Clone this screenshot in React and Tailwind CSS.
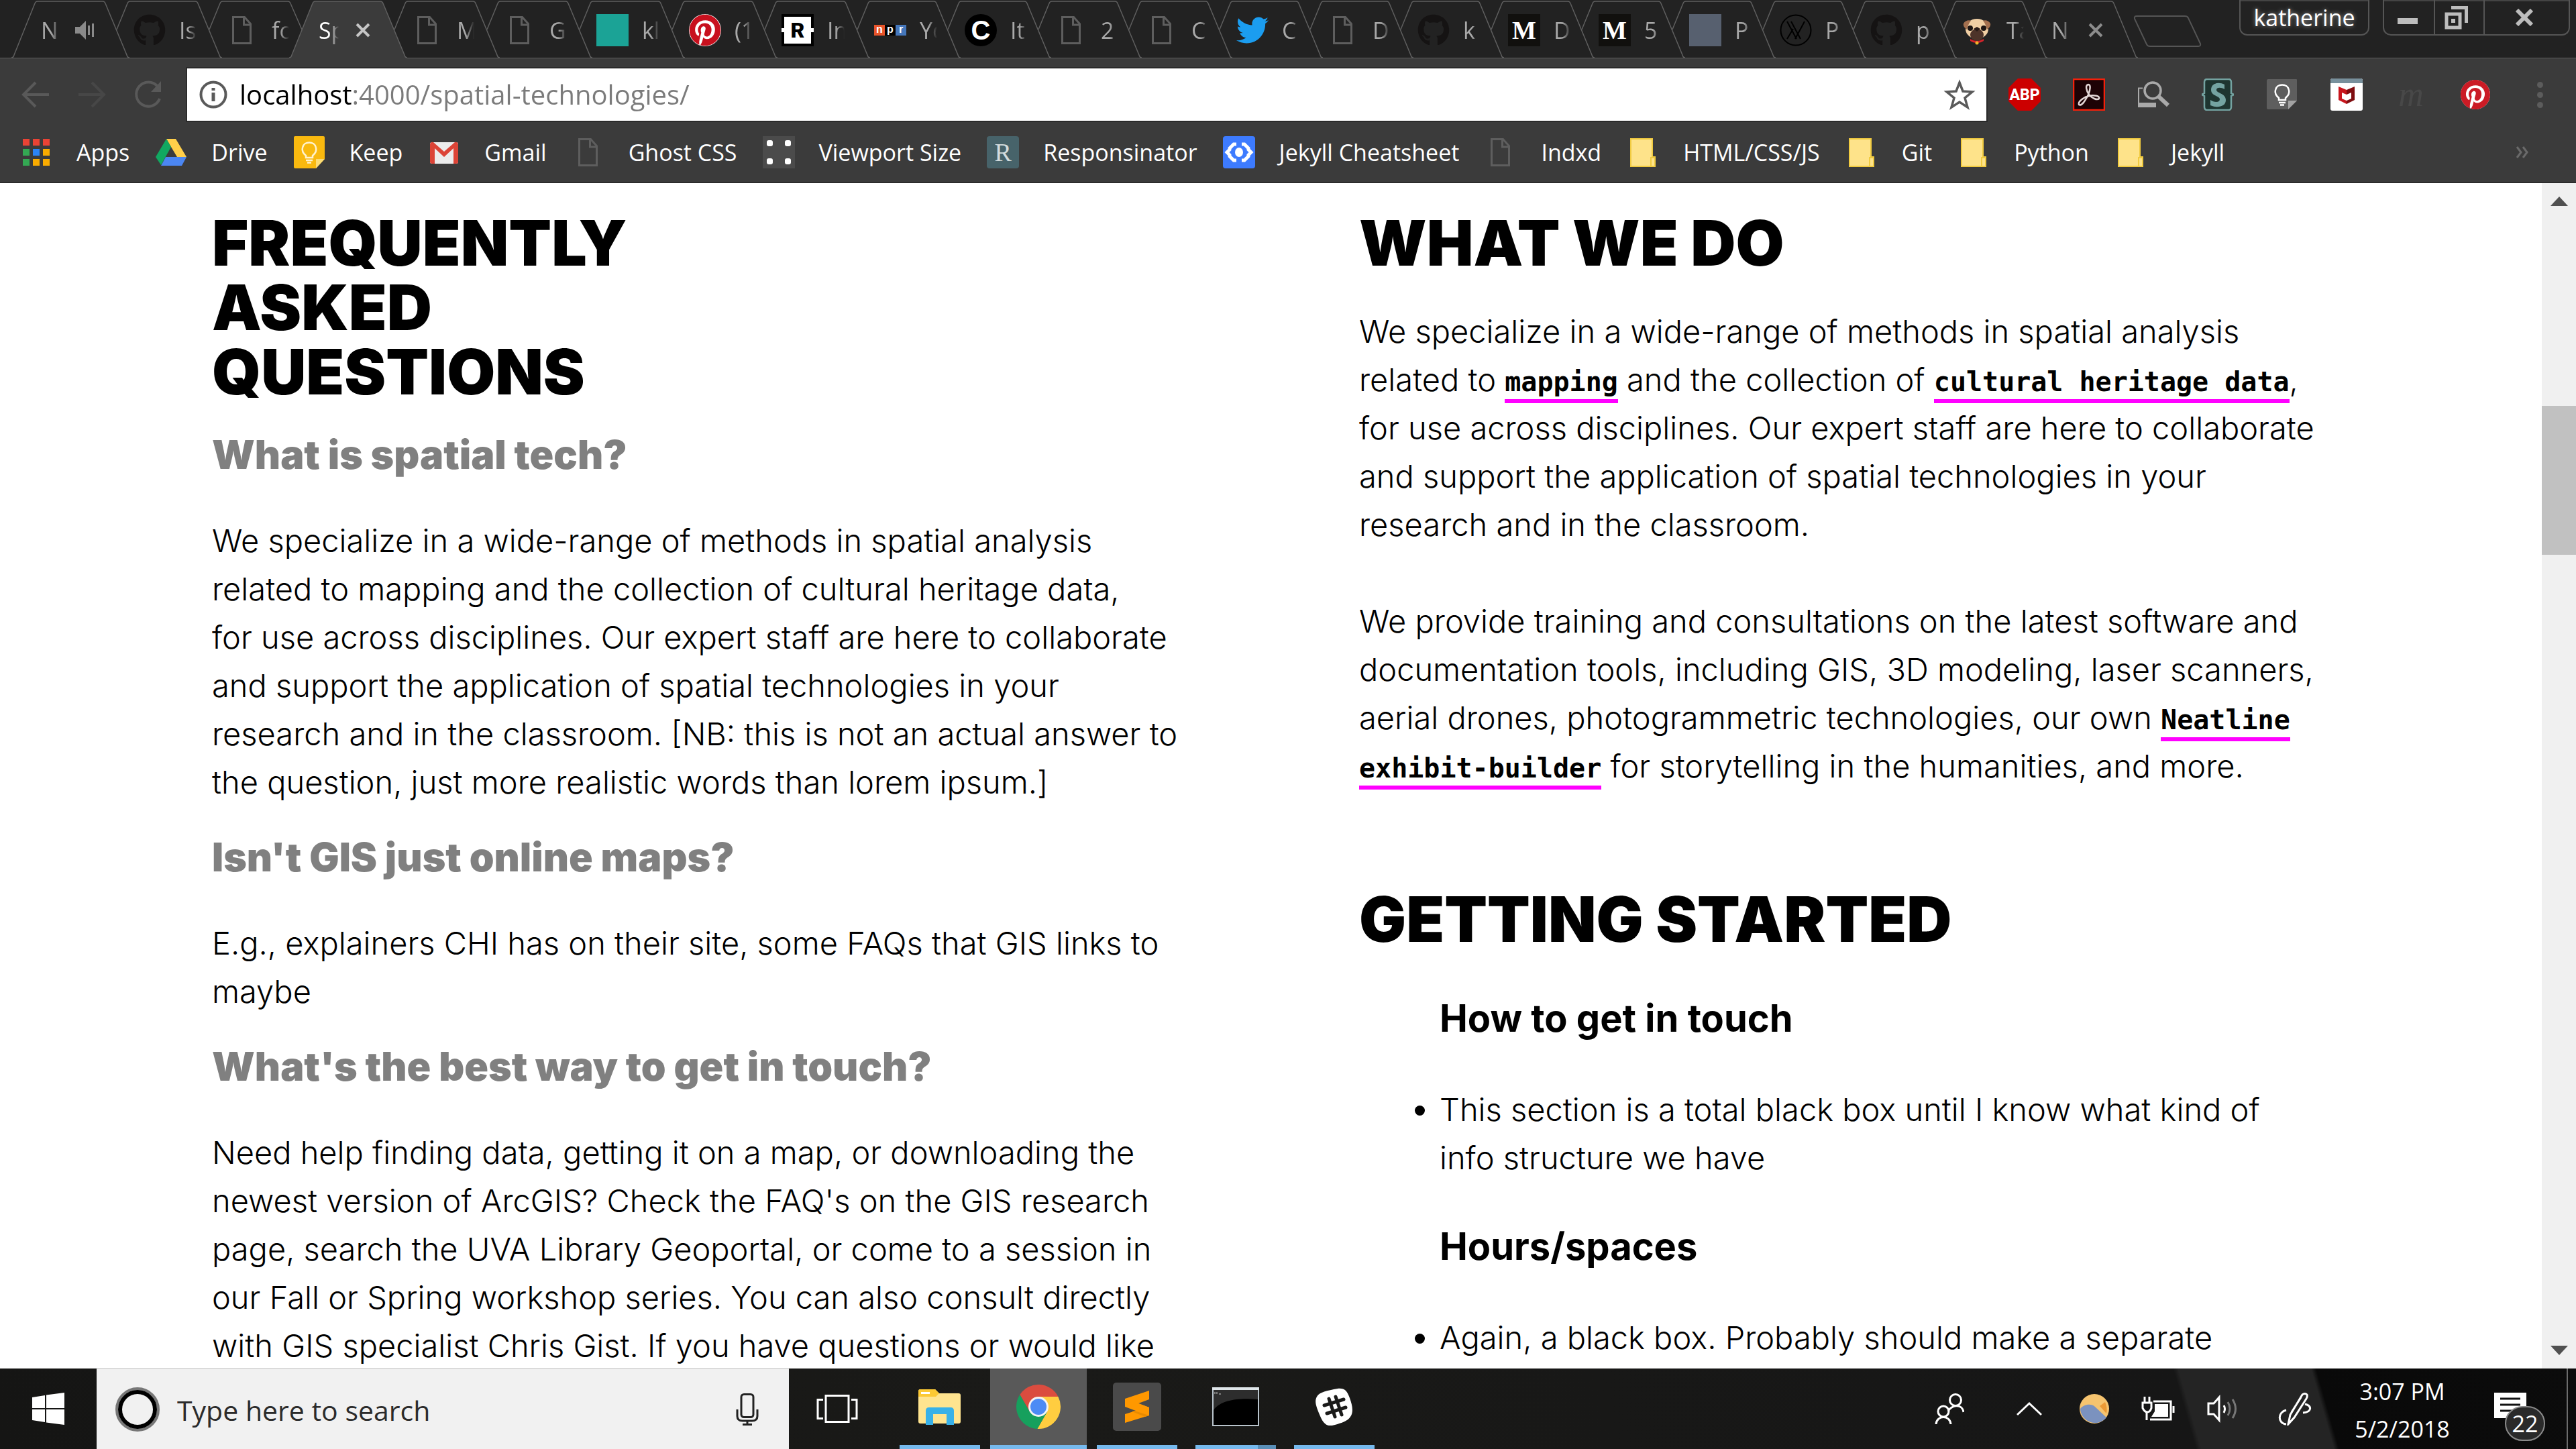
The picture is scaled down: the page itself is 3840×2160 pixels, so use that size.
import React from "react";
import { FaGithub, FaPinterest, FaTwitter } from "react-icons/fa";

/* ---------- favicons and bookmark icons ---------- */

function PageIcon() {
  return (
    <svg viewBox="0 0 48 48" className="size-12" fill="none" stroke="#5e5e5e" strokeWidth="3">
      <path d="M10.5 4.500h17l9 10v29h-26z" />
      <path d="M26.500 5v11h10" />
    </svg>
  );
}

function GithubIcon() {
  return <FaGithub className="size-12 text-[#151313]" />;
}

function PinterestIcon() {
  return (
    <span className="flex size-12 items-center justify-center rounded-full bg-white">
      <FaPinterest className="size-12 text-[#c8101e]" />
    </span>
  );
}

function SolidIcon({ className }) {
  return <span className={`block size-12 ${className}`} />;
}

function RNewsIcon() {
  return (
    <span className="flex size-12 items-center justify-center bg-[linear-gradient(#000_44%,#fff_44%,#fff_56%,#000_56%)]">
      <span className="flex h-10 w-10 items-center justify-center bg-white font-['Roboto'] text-[32px] leading-none font-black text-black">
        R
      </span>
    </span>
  );
}

function NprIcon() {
  return (
    <span className="flex h-4 w-12 items-stretch font-['Liberation_Sans'] text-[16px] leading-[14px] font-bold text-white">
      <span className="flex-1 bg-[#e8542a] text-center">n</span>
      <span className="flex-1 bg-black text-center">p</span>
      <span className="flex-1 bg-[#4577bb] text-center">r</span>
    </span>
  );
}

function CIcon() {
  return (
    <span className="flex size-12 items-center justify-center rounded-full bg-black font-['Liberation_Sans'] text-[40px] leading-none font-bold text-white">
      C
    </span>
  );
}

function MediumIcon() {
  return (
    <span className="flex size-12 items-center justify-center bg-[#11100e] font-['Liberation_Serif'] text-[38px] leading-none font-bold text-white">
      M
    </span>
  );
}

function XCircleIcon() {
  return (
    <svg viewBox="0 0 48 48" className="size-12" fill="none" stroke="#000" strokeWidth="2">
      <circle cx="24" cy="24" r="22.500" />
      <path d="M11 11l14 26M17 11l14 26M37 11L23 37M11 37l9-15" />
    </svg>
  );
}

function PugIcon() {
  return (
    <svg viewBox="0 0 48 48" className="size-12">
      <ellipse cx="24" cy="22" rx="17" ry="15" fill="#f0cfa4" />
      <path d="M4 14c2-4 8-6 11-4-3 3-5 9-6 13-3-2-6-5-5-9zM44 14c-2-4-8-6-11-4 3 3 5 9 6 13 3-2 6-5 5-9z" fill="#a4704f" />
      <circle cx="14" cy="21" r="4" fill="#1d1513" />
      <circle cx="34" cy="21" r="4" fill="#1d1513" />
      <ellipse cx="24" cy="31" rx="10" ry="9" fill="#4d3329" />
      <path d="M19 22l5-3 5 3-5 4z" fill="#2a1b17" />
      <path d="M14 37c6 4 14 4 20 0v3c-6 4-14 4-20 0z" fill="#d8232a" />
      <circle cx="24" cy="43" r="2.500" fill="#f0b429" />
    </svg>
  );
}

function AppsIcon() {
  const colors = ["#ea4335", "#ea4335", "#ea4335", "#34a853", "#2b83f6", "#f9ab00", "#34a853", "#f9ab00", "#f9ab00"];
  return (
    <svg viewBox="0 0 48 48" className="size-12">
      {colors.map((c, i) => (
        <rect key={i} x={4 + (i % 3) * 15} y={4 + Math.floor(i / 3) * 15} width="10" height="10" fill={c} />
      ))}
    </svg>
  );
}

function DriveIcon() {
  return (
    <svg viewBox="0 0 48 48" className="size-12">
      <path d="M17 4h14l16 27H33z" fill="#ffcf4a" />
      <path d="M17 4l7 12L9 43 1 31z" fill="#11a861" />
      <path d="M16 31h31l-7 13H9z" fill="#4b86f2" />
    </svg>
  );
}

function KeepIcon() {
  return (
    <svg viewBox="0 0 48 48" className="size-12">
      <path d="M3 0h42q2 0 2 2v32L34 48H3q-2 0-2-2V2q0-2 2-2z" fill="#f9b90f" />
      <path d="M47 34L34 48V34z" fill="#fcdc75" />
      <path d="M19 29c-5-4-6-8-5-12 2-10 18-10 20 0 1 4 0 8-5 12v3H19zM19 36h10M21 39.500h6" fill="none" stroke="#fff3cf" strokeWidth="2.500" />
    </svg>
  );
}

function GmailIcon() {
  return (
    <svg viewBox="0 0 48 48" className="size-12">
      <rect x="3" y="9" width="42" height="32" rx="3" fill="#ececec" />
      <path d="M3 12v26q0 3 3 3h4V18l14 13 14-13v23h4q3 0 3-3V12q-1-4-5-3L24 23 8 9q-4-1-5 3z" fill="#dc4437" />
    </svg>
  );
}

function ViewportIcon() {
  return (
    <svg viewBox="0 0 48 48" className="size-12">
      <rect width="48" height="48" fill="#4b4b4b" />
      <g fill="#fff">
        <rect x="6" y="6" width="9" height="9" rx="3" />
        <rect x="33" y="6" width="9" height="9" rx="3" />
        <rect x="6" y="33" width="9" height="9" rx="3" />
        <rect x="33" y="33" width="9" height="9" rx="3" />
      </g>
    </svg>
  );
}

function ResponsinatorIcon() {
  return (
    <span className="flex size-12 items-center justify-center rounded-sm bg-[#47636a] font-['Liberation_Serif'] text-[38px] leading-none text-[#d3dcdd]">
      R
    </span>
  );
}

function CheatsheetIcon() {
  return (
    <svg viewBox="0 0 48 48" className="size-12">
      <rect width="48" height="48" rx="4" fill="#3d7bff" />
      <path d="M20 12h-4l-6 6v2l-4 4 4 4v2l6 6h4M28 12h4l6 6v2l4 4-4 4v2l-6 6h-4" fill="none" stroke="#fff" strokeWidth="5" />
      <ellipse cx="24" cy="24" rx="6" ry="7" fill="#fff" />
    </svg>
  );
}

function FolderIcon() {
  return (
    <svg viewBox="0 0 48 48" className="size-12">
      <path d="M6 4h32v27h4v14H6z" fill="#fee38a" stroke="#f1cb40" strokeWidth="2" />
      <path d="M36 45V32h5" fill="none" stroke="#f1cb40" strokeWidth="2" />
    </svg>
  );
}

/* ---------- tab strip ---------- */

const tabs = [
  { text: "N", kind: "sound" },
  { text: "Is", icon: <GithubIcon /> },
  { text: "fo", icon: <PageIcon />, halfRight: true },
  { text: "Sp", kind: "active" },
  { text: "M", icon: <PageIcon /> },
  { text: "G", icon: <PageIcon /> },
  { text: "kl", icon: <SolidIcon className="bg-[#1ba396]" /> },
  { text: "(1", icon: <PinterestIcon /> },
  { text: "In", icon: <RNewsIcon /> },
  { text: "Yo", icon: <NprIcon />, narrow: true },
  { text: "It", icon: <CIcon />, narrow: true },
  { text: "2", icon: <PageIcon />, narrow: true },
  { text: "C", icon: <PageIcon />, narrow: true },
  { text: "C", icon: <FaTwitter className="size-12 text-[#1b9df0]" />, narrow: true },
  { text: "D", icon: <PageIcon />, narrow: true },
  { text: "k", icon: <GithubIcon />, narrow: true },
  { text: "D", icon: <MediumIcon />, narrow: true },
  { text: "5", icon: <MediumIcon />, narrow: true },
  { text: "P", icon: <SolidIcon className="bg-[#57606f]" />, narrow: true },
  { text: "P", icon: <XCircleIcon />, narrow: true },
  { text: "p", icon: <GithubIcon />, narrow: true },
  { text: "Ta", icon: <PugIcon />, narrow: true },
  { text: "N", kind: "last", narrow: true },
];

function TabOutline({ tab, first }) {
  const w = tab.narrow ? 135 : 138;
  const left = first || tab.kind === "active" ? "M0 86Q3 86 4 82L35 5Q36 2 39 2" : "M19 44L35 5Q36 2 39 2";
  const right = tab.halfRight ? `H${w - 2}Q${w + 1} 2 ${w + 2} 5L${w + 19} 44` : `H${w - 2}Q${w + 1} 2 ${w + 2} 5L${w + 34} 82Q${w + 35} 86 ${w + 38} 86`;
  return (
    <svg
      viewBox={`0 0 ${w + 38} 88`}
      className={tab.narrow ? "absolute top-0 -left-[19px] h-[88px] w-[173px]" : "absolute top-0 -left-[19px] h-[88px] w-[176px]"}
      fill="none"
    >
      {tab.kind === "active" && <path d={`${left}${right}V88H0z`} fill="#3b3b3b" />}
      <path d={left + right} stroke="#5f5f5f" strokeWidth="1.500" />
    </svg>
  );
}

function CloseGlyph() {
  return (
    <svg viewBox="0 0 24 24" className="size-6" stroke="currentColor" strokeWidth="4">
      <path d="M3 3l18 18M21 3L3 21" />
    </svg>
  );
}

function TabStrip() {
  return (
    <div className="flex h-[87px] border-b border-[#5f5f5f] bg-[#222222] pl-9">
      {tabs.map((tab, i) => (
        <button
          key={i}
          type="button"
          className={`relative flex shrink-0 items-center pt-1 pl-[25px] text-[34px] ${tab.narrow ? "w-[135px]" : "w-[138px]"} ${
            tab.kind === "active" ? "z-10 text-white" : "text-[#a9a9a9]"
          }`}
        >
          <TabOutline tab={tab} first={i === 0} />
          {tab.icon && <span className="relative mr-5 shrink-0">{tab.icon}</span>}
          <span
            className={`relative overflow-hidden text-left whitespace-nowrap [mask-image:linear-gradient(to_right,#000_50%,transparent)] ${
              tab.kind ? "w-[30px]" : "w-[26px]"
            }`}
          >
            {tab.text}
          </span>
          {tab.kind === "sound" && (
            <svg viewBox="0 0 30 30" className="relative ml-5 size-[30px]" fill="#8a8a8a">
              <path d="M1 10h7l9-9v28l-9-9H1zM20 8h3v14h-3zM26 5h3v20h-3z" />
            </svg>
          )}
          {tab.kind === "active" && <span className="relative ml-6 text-[#c5c5c5]"><CloseGlyph /></span>}
          {tab.kind === "last" && <span className="relative ml-6 text-[#8c8c8c]"><CloseGlyph /></span>}
        </button>
      ))}
      <button type="button" aria-label="New tab" className="mt-[22px] ml-3 h-12 shrink-0 self-start">
        <svg viewBox="0 0 104 48" className="h-12 w-[104px]" fill="none" stroke="#555" strokeWidth="2">
          <path d="M5 2h72q4 0 5 3l18 38q1 4-3 4H25q-4 0-5-3L2 6Q1 2 5 2z" />
        </svg>
      </button>
      <div className="ml-auto flex h-[53px] gap-5 pr-[9px]">
        <button
          type="button"
          className="flex w-[194px] items-center justify-center rounded-b-xl border-2 border-t-0 border-[#555] text-[34px] leading-none text-white shadow-[inset_0_2px_0_#444] [text-shadow:0_0_6px_#999]"
        >
          katherine
        </button>
        <div className="flex rounded-b-xl border-2 border-t-0 border-[#555] text-[#bdbdbd] shadow-[inset_0_2px_0_#444]">
          <button type="button" aria-label="Minimize" className="flex w-[74px] items-center justify-center pt-3 pr-1">
            <span className="h-[9px] w-[30px] bg-current" />
          </button>
          <button type="button" aria-label="Restore" className="flex w-[76px] items-center justify-center border-x-2 border-[#555] pr-2">
            <svg viewBox="0 0 36 36" className="size-9" fill="none" stroke="currentColor">
              <path d="M10 3.500h22.500V26" strokeWidth="5" />
              <rect x="3" y="13" width="20" height="20" strokeWidth="5" />
              <rect x="10" y="20" width="6" height="6" fill="currentColor" stroke="none" />
            </svg>
          </button>
          <button type="button" aria-label="Close" className="flex w-[125px] items-center justify-center pr-2">
            <svg viewBox="0 0 28 26" className="h-[26px] w-7" stroke="currentColor" strokeWidth="6">
              <path d="M3 2l22 22M25 2L3 24" />
            </svg>
          </button>
        </div>
      </div>
    </div>
  );
}

/* ---------- address bar row ---------- */

function Extensions() {
  return (
    <div className="ml-[33px] flex items-center gap-12">
      <button type="button" aria-label="AdBlock Plus" className="flex size-12 items-center justify-center bg-[#cc0000] font-['Roboto'] text-[23px] leading-none font-extrabold text-white [clip-path:polygon(29%_0,71%_0,100%_29%,100%_71%,71%_100%,29%_100%,0_71%,0_29%)]">
        ABP
      </button>
      <button type="button" aria-label="Acrobat">
        <svg viewBox="0 0 48 48" className="size-12">
          <rect x="1" y="1" width="46" height="46" fill="#1d0205" stroke="#f5200a" strokeWidth="2.500" />
          <path d="M23 9c-5 1-3 9 1 15 4 5 12 9 15 6 2-4-8-6-15-4-6 1-17 8-15 13 4 3 10-7 14-15 3-7 4-15 0-15z" fill="none" stroke="#e3d6d6" strokeWidth="2.500" />
        </svg>
      </button>
      <button type="button" aria-label="Image search">
        <svg viewBox="0 0 48 48" className="size-12" fill="none" stroke="#a9a9a9">
          <path d="M8 14.500H2V42" strokeWidth="2" />
          <path d="M1 39.500h27" strokeWidth="7" />
          <circle cx="23" cy="18" r="12" strokeWidth="3.500" />
          <path d="M32 27l14 13" strokeWidth="6" />
        </svg>
      </button>
      <button type="button" aria-label="Stylish">
        <svg viewBox="0 0 48 48" className="size-12">
          <path d="M8 1h32q4 0 4 5v16l4 2-4 2v16q0 5-4 5H8q-4 0-4-5V26l-4-2 4-2V6q0-5 4-5z" fill="#1e3530" stroke="#74a3a1" strokeWidth="2.500" />
          <path d="M34 9v7c-5-3-12-3-12 1 0 5 14 5 14 15 0 11-14 12-23 8v-8c6 4 14 4 14-1s-13-5-13-14C14 6 26 5 34 9z" fill="#74a3a1" />
        </svg>
      </button>
      <button type="button" aria-label="Keep">
        <svg viewBox="0 0 48 48" className="size-12">
          <path d="M3 1h42q1 0 1 1v31L33 46H3q-2 0-2-2V3q0-2 2-2z" fill="#5e5e5e" />
          <path d="M46 33L33 46V33z" fill="#a3a3a3" />
          <path d="M19 29c-5-4-6-8-5-12 2-10 18-10 20 0 1 4 0 8-5 12v3H19zM19 36h10M21 39.500h6" fill="none" stroke="#fff" strokeWidth="2.500" />
        </svg>
      </button>
      <button type="button" aria-label="McAfee">
        <svg viewBox="0 0 48 48" className="size-12">
          <rect width="48" height="48" rx="3" fill="#fff" />
          <path d="M0 7V3q0-3 3-3h42q3 0 3 3v4z" fill="#78909c" />
          <path d="M12 12l12 5v7l-7-3v9l7 3v5l-12-6z" fill="#c8161d" />
          <path d="M36 12l-12 5v7l7-3v9l-7 3v5l12-6z" fill="#7f0d10" />
        </svg>
      </button>
      <button type="button" aria-label="Mendeley" className="size-12 font-['Liberation_Serif'] text-[52px] leading-[40px] text-[#484848] italic">
        m
      </button>
      <button type="button" aria-label="Pinterest" className="flex size-12 items-center justify-center">
        <span className="flex size-11 items-center justify-center rounded-full bg-white">
          <FaPinterest className="size-[46px] text-[#cb1b25]" />
        </span>
      </button>
    </div>
  );
}

function Toolbar() {
  return (
    <div className="flex h-[108px] items-center bg-[#3b3b3b] pr-[49px] pl-[31px]">
      <div className="flex items-center gap-10 text-[#595959]">
        <button type="button" aria-label="Back">
          <svg viewBox="0 0 44 44" className="size-11" fill="none" stroke="currentColor" strokeWidth="4">
            <path d="M22 4L4 22l18 18M4 22h38" />
          </svg>
        </button>
        <button type="button" aria-label="Forward" className="text-[#474747]">
          <svg viewBox="0 0 44 44" className="size-11" fill="none" stroke="currentColor" strokeWidth="4">
            <path d="M22 4l18 18-18 18M2 22h38" />
          </svg>
        </button>
        <button type="button" aria-label="Reload">
          <svg viewBox="0 0 44 44" className="size-11" fill="none" stroke="currentColor" strokeWidth="4">
            <path d="M36 10a18 18 0 1 0 3 18" />
            <path d="M41 2v16H26z" fill="currentColor" stroke="none" />
          </svg>
        </button>
      </div>
      <div className="ml-9 flex h-[78px] flex-1 items-center bg-white pr-4 pl-[18px] shadow-[0_0_0_2px_#2a2a2a]">
        <svg viewBox="0 0 42 42" className="size-[42px] shrink-0" fill="none" stroke="#5a5a5a" strokeWidth="4">
          <circle cx="21" cy="21" r="18.500" />
          <path d="M21 18v13M21 11v4" strokeWidth="5" />
        </svg>
        <label htmlFor="address" className="sr-only">
          Address
        </label>
        <input
          id="address"
          defaultValue="localhost:4000/spatial-technologies/"
          className="ml-[18px] flex-1 bg-linear-[90deg,#000_168px,#7b7b7b_168px] bg-clip-text text-[40px] text-transparent outline-none"
        />
        <button type="button" aria-label="Bookmark">
          <svg viewBox="0 0 48 48" className="size-12" fill="none" stroke="#5a5a5a" strokeWidth="3.500">
            <path d="M24 6l5 13 14 1-11 9 4 14-12-8-12 8 4-14L5 20l14-1z" />
          </svg>
        </button>
      </div>
      <Extensions />
      <button type="button" aria-label="Menu" className="ml-[68px] flex flex-col gap-[6px]">
        <span className="size-[9px] rounded-full bg-[#5c5c5c]" />
        <span className="size-[9px] rounded-full bg-[#5c5c5c]" />
        <span className="size-[9px] rounded-full bg-[#5c5c5c]" />
      </button>
    </div>
  );
}

const bookmarks = [
  ["Apps", <AppsIcon />],
  ["Drive", <DriveIcon />],
  ["Keep", <KeepIcon />],
  ["Gmail", <GmailIcon />],
  ["Ghost CSS", <PageIcon />],
  ["Viewport Size", <ViewportIcon />],
  ["Responsinator", <ResponsinatorIcon />],
  ["Jekyll Cheatsheet", <CheatsheetIcon />],
  ["Indxd", <PageIcon />],
  ["HTML/CSS/JS", <FolderIcon />],
  ["Git", <FolderIcon />],
  ["Python", <FolderIcon />],
  ["Jekyll", <FolderIcon />],
];

function BookmarksBar() {
  return (
    <nav className="flex h-[78px] items-center gap-[38px] border-b-2 border-[#2c2c2c] bg-[#3b3b3b] pr-[70px] pb-3 pl-[30px]">
      {bookmarks.map(([label, icon]) => (
        <a key={label} href="#" className="flex items-center gap-9 text-[34px] whitespace-nowrap text-white">
          {icon}
          {label}
        </a>
      ))}
      <button type="button" aria-label="More bookmarks" className="ml-auto">
        <svg viewBox="0 0 20 20" className="size-5" fill="none" stroke="#6a6a6a" strokeWidth="3">
          <path d="M2 2l6 8-6 8M11 2l6 8-6 8" />
        </svg>
      </button>
    </nav>
  );
}

/* ---------- page ---------- */

function Title({ children }) {
  return <h1 className="text-[93px] leading-[96px] font-black">{children}</h1>;
}

function Question({ children }) {
  return <h2 className="mt-10 mb-14 text-[59px] leading-[72px] font-black text-[#808080]">{children}</h2>;
}

function PageLink({ children }) {
  return (
    <a href="#" className="border-b-[6px] border-[#ff00ff] pb-[3px] font-['DejaVu_Sans_Mono'] text-[40px] leading-10 font-bold">
      {children}
    </a>
  );
}

function Topic({ title, children }) {
  return (
    <section>
      <h2 className="mb-16 text-[56px] leading-[72px] font-bold">{title}</h2>
      <ul>
        <li className="relative">
          <span className="absolute top-[30px] -left-[37px] size-[15px] rounded-full bg-black" />
          {children}
        </li>
      </ul>
    </section>
  );
}

function Page() {
  return (
    <div className="flex min-h-0 flex-1 bg-white">
      <main className="grid min-w-0 flex-1 grid-cols-2 gap-[263px] overflow-hidden px-[316px] pt-[41px] font-['Inter'] text-[47px] leading-[72px] font-light whitespace-nowrap text-black">
        <div>
          <Title>
            FREQUENTLY
            <br />
            ASKED
            <br />
            QUESTIONS
          </Title>
          <Question>What is spatial tech?</Question>
          <p>
            We specialize in a wide-range of methods in spatial analysis
            <br />
            related to mapping and the collection of cultural heritage data,
            <br />
            for use across disciplines. Our expert staff are here to collaborate
            <br />
            and support the application of spatial technologies in your
            <br />
            research and in the classroom. [NB: this is not an actual answer to
            <br />
            the question, just more realistic words than lorem ipsum.]
          </p>
          <Question>Isn't GIS just online maps?</Question>
          <p>
            E.g., explainers CHI has on their site, some FAQs that GIS links to
            <br />
            maybe
          </p>
          <Question>What's the best way to get in touch?</Question>
          <p>
            Need help finding data, getting it on a map, or downloading the
            <br />
            newest version of ArcGIS? Check the FAQ's on the GIS research
            <br />
            page, search the UVA Library Geoportal, or come to a session in
            <br />
            our Fall or Spring workshop series. You can also consult directly
            <br />
            with GIS specialist Chris Gist. If you have questions or would like
          </p>
        </div>
        <div>
          <Title>WHAT WE DO</Title>
          <p className="mt-12">
            We specialize in a wide-range of methods in spatial analysis
            <br />
            related to <PageLink>mapping</PageLink> and the collection of <PageLink>cultural heritage data</PageLink>,
            <br />
            for use across disciplines. Our expert staff are here to collaborate
            <br />
            and support the application of spatial technologies in your
            <br />
            research and in the classroom.
          </p>
          <p className="mt-[72px] mb-36">
            We provide training and consultations on the latest software and
            <br />
            documentation tools, including GIS, 3D modeling, laser scanners,
            <br />
            aerial drones, photogrammetric technologies, our own{" "}
            <PageLink>
              Neatline
              <br />
              exhibit-builder
            </PageLink>{" "}
            for storytelling in the humanities, and more.
          </p>
          <Title>GETTING STARTED</Title>
          <div className="mt-16 ml-[120px] flex flex-col gap-[60px]">
            <Topic title="How to get in touch">
              This section is a total black box until I know what kind of
              <br />
              info structure we have
            </Topic>
            <Topic title="Hours/spaces">Again, a black box. Probably should make a separate</Topic>
          </div>
        </div>
      </main>
      <div className="flex w-[51px] shrink-0 flex-col items-center justify-between bg-[#f0f0f0] py-5">
        <svg viewBox="0 0 26 14" className="h-[14px] w-[26px]" fill="#505050">
          <path d="M13 0l13 14H0z" />
        </svg>
        <div className="flex w-full flex-1 flex-col pt-[298px]">
          <div className="h-[222px] w-full bg-[#c1c1c1]" />
        </div>
        <svg viewBox="0 0 26 14" className="h-[14px] w-[26px]" fill="#505050">
          <path d="M13 14L0 0h26z" />
        </svg>
      </div>
    </div>
  );
}

/* ---------- taskbar ---------- */

function ExplorerIcon() {
  return (
    <svg viewBox="0 0 66 54" className="h-[54px] w-[66px]">
      <path d="M1 4q0-3 3-3h22l6 6h29q3 0 3 3v39q0 3-3 3H4q-3 0-3-3z" fill="#ffe48f" />
      <path d="M1 4q0-3 3-3h22l6 6-5 5H1z" fill="#fcc934" />
      <path d="M5 5h13v3H5z" fill="#fff" />
      <path d="M12 54V33q0-5 5-5h32q5 0 5 5v21H43V38H23v16z" fill="#38b1e8" />
    </svg>
  );
}

function ChromeIcon() {
  return (
    <svg viewBox="2 2 44 44" className="size-[66px]">
      <path d="M5.540 12.030A22 22 0 0 1 43.600 14H24L15.340 29z" fill="#db4c3f" />
      <path d="M43.600 14A22 22 0 0 1 22.860 45.970L32.660 29 24 14z" fill="#ffcd40" />
      <path d="M22.860 45.970A22 22 0 0 1 5.540 12.030L15.340 29H32.660z" fill="#16a05d" />
      <circle cx="24" cy="24" r="10" fill="#f4f4f4" />
      <circle cx="24" cy="24" r="8" fill="#4c8bf5" />
    </svg>
  );
}

function SublimeIcon() {
  return (
    <svg viewBox="0 0 72 72" className="size-[72px]">
      <rect width="72" height="72" rx="5" fill="#4a4a4a" />
      <path d="M54 12v13L38 31l16 6v12L18 60V47l16-5-16-6V24z" fill="#ff9800" />
      <path d="M34 42l20 7V37L38 31z" fill="#ff9800" />
      <path d="M32 42l22 7-6 2-20-8z" fill="#e88b00" />
    </svg>
  );
}

function TerminalIcon() {
  return (
    <svg viewBox="0 0 70 58" className="h-[58px] w-[70px]">
      <rect x="1" y="1" width="68" height="56" fill="#000" stroke="#b9c4cc" strokeWidth="2" />
      <path d="M2 4h66v14C40 16 14 18 2 34z" fill="#2d2d2d" />
      <rect width="70" height="4" fill="#dfe6ea" />
      <path d="M4 7v3M7 7v3M10 10h3" stroke="#ccc" />
    </svg>
  );
}

function SlackIcon() {
  return (
    <svg viewBox="0 0 56 56" className="size-14">
      <path d="M33 1C43 0 47 4 51 15s6 21 1 28-13 9-23 12S13 56 7 42-2 20 2 13 17 4 33 1z" fill="#fff" />
      <path d="M20 16l9 27M30 13l9 27M13 26l29-9M17 38l28-9" stroke="#1a1a19" strokeWidth="5" strokeLinecap="round" />
    </svg>
  );
}

function TaskButton({ label, active, children }) {
  return (
    <button
      type="button"
      aria-label={label}
      className={`flex w-36 flex-col items-center ${active ? "bg-[#595959]" : ""}`}
    >
      <span className="flex flex-1 items-center">{children}</span>
      <span className={`flex h-[6px] bg-[#76b9ed] ${active ? "w-full" : "w-[120px]"}`}>
        {label === "Command Prompt" && <span className="ml-auto w-[27px] bg-[#5a8fb8]" />}
      </span>
    </button>
  );
}

function Tray() {
  return (
    <div className="ml-auto flex items-center text-white">
      <button type="button" aria-label="People" className="mr-[78px]">
        <svg viewBox="0 0 44 46" className="h-[46px] w-11" fill="none" stroke="currentColor" strokeWidth="3">
          <circle cx="31" cy="10" r="8.500" />
          <path d="M20 27c3-9 21-13 23 1" />
          <circle cx="13" cy="27" r="8" />
          <path d="M2 46c1-14 21-14 22 0" />
        </svg>
      </button>
      <button type="button" aria-label="Show hidden icons" className="mr-14">
        <svg viewBox="0 0 38 22" className="h-[22px] w-[38px]" fill="none" stroke="currentColor" strokeWidth="3">
          <path d="M1 20L19 3l18 17" />
        </svg>
      </button>
      <svg viewBox="0 0 44 44" className="mr-12 size-11">
        <circle cx="22" cy="22" r="22" fill="#f6c46f" />
        <path d="M30 18l8-6q4 8 2 17z" fill="#ec9a36" />
        <path d="M1 22c4-6 16-9 22-3l17 16A22 22 0 0 1 1 22z" fill="#7b92bf" />
      </svg>
      <svg viewBox="0 0 50 36" className="mr-12 h-9 w-[50px]" fill="none" stroke="currentColor" strokeWidth="3">
        <path d="M18 7h26v27H13M48 14v10" />
        <path d="M20 11h20v19H15l5-8z" fill="currentColor" stroke="none" />
        <path d="M2 9h13v8q-2 6-6 6t-7-6zM5 0v9M12 0v9M8 22v13" />
      </svg>
      <svg viewBox="0 0 50 44" className="mr-14 h-11 w-[50px]" fill="none" stroke="currentColor" strokeWidth="3">
        <path d="M2 14h8l8-9v34l-8-9H2zM25 17q3 5 0 11" />
        <path d="M31 12q6 10 0 20M38 8q9 14 0 28" stroke="#777" />
      </svg>
      <svg viewBox="0 0 50 50" className="mr-[60px] size-[50px]" fill="none" stroke="currentColor" strokeWidth="3">
        <path d="M15 48l3-14L36 4q4-3 7 0 1 3-1 6L24 38zM20 30l14-22" />
        <path d="M12 27C-1 30-1 47 12 48M40 18c11 3 10 12-3 13" />
      </svg>
      <div className="mr-[62px] flex w-[150px] flex-col pt-1 text-center text-[34px] leading-14 whitespace-nowrap">
        <span>3:07 PM</span>
        <span>5/2/2018</span>
      </div>
      <button type="button" aria-label="Notifications" className="relative mr-[60px]">
        <svg viewBox="0 0 48 40" className="mb-2 h-10 w-12">
          <path d="M0 0h48v38H32l-9 8v-8H0z" fill="#fff" />
          <path d="M9 9h30M9 18h30M9 27h18" stroke="#111" strokeWidth="3" />
        </svg>
        <span className="absolute top-5 left-4 flex h-[52px] w-[60px] items-center justify-center rounded-full border-2 border-[#8b8b8b] bg-[#2a2a2a] text-[34px] font-medium">
          22
        </span>
      </button>
      <span className="mr-[12px] h-[120px] w-[2px] bg-[#6d6d6d]" />
    </div>
  );
}

function Taskbar() {
  return (
    <footer className="flex h-[120px] shrink-0 bg-[linear-gradient(74deg,#151514_0%,#1a1a18_40%,#161616_84.500%,#242424_84.700%,#242424_89.800%,#090909_90%,#0c0c0c_100%)]">
      <button type="button" aria-label="Start" className="flex w-36 items-center justify-center">
        <svg viewBox="0 0 48 48" className="size-12" fill="#fff">
          <path d="M0 7l19-3v19H0zM21 3.500L48 0v23H21zM0 25h19v19L0 41zM21 25h27v23l-27-3.500z" />
        </svg>
      </button>
      <div className="flex w-[1032px] items-center border-t border-[#b5b5b5] bg-[#f1f1f1] pr-[45px] pl-7">
        <svg viewBox="0 0 66 66" className="size-[66px] shrink-0" fill="none">
          <circle cx="33" cy="33" r="31" stroke="#777" strokeWidth="4" />
          <circle cx="33" cy="33" r="26" stroke="#000" strokeWidth="6" />
        </svg>
        <label htmlFor="search" className="sr-only">
          Search
        </label>
        <input
          id="search"
          placeholder="Type here to search"
          className="ml-[26px] flex-1 pt-1 text-[41px] text-black outline-none placeholder:text-[#2b2b2b]"
        />
        <svg viewBox="0 0 34 48" className="h-12 w-[34px] shrink-0" fill="none" stroke="#222" strokeWidth="3">
          <rect x="8" y="1.500" width="18" height="34" rx="4" />
          <path d="M2 24v10q0 7 8 7h14q8 0 8-7V24M17 41v5M10 46.500h14" />
        </svg>
      </div>
      <button type="button" aria-label="Task view" className="flex w-36 items-center justify-center">
        <svg viewBox="0 0 62 42" className="h-[42px] w-[62px]" fill="none" stroke="#fff" strokeWidth="3">
          <path d="M14 1.500h34v39H14zM10 7.500H2v28h8M52 7.500h8v28h-8" />
        </svg>
      </button>
      <div className="ml-[9px] flex gap-[3px]">
        <TaskButton label="File Explorer"><ExplorerIcon /></TaskButton>
        <TaskButton label="Chrome" active><ChromeIcon /></TaskButton>
        <TaskButton label="Sublime Text"><SublimeIcon /></TaskButton>
        <TaskButton label="Command Prompt"><TerminalIcon /></TaskButton>
        <TaskButton label="Slack"><SlackIcon /></TaskButton>
      </div>
      <Tray />
    </footer>
  );
}

export default function App() {
  return (
    <div className="flex h-screen flex-col overflow-hidden bg-white font-['Open_Sans',sans-serif]">
      <header>
        <TabStrip />
        <Toolbar />
        <BookmarksBar />
      </header>
      <Page />
      <Taskbar />
    </div>
  );
}
